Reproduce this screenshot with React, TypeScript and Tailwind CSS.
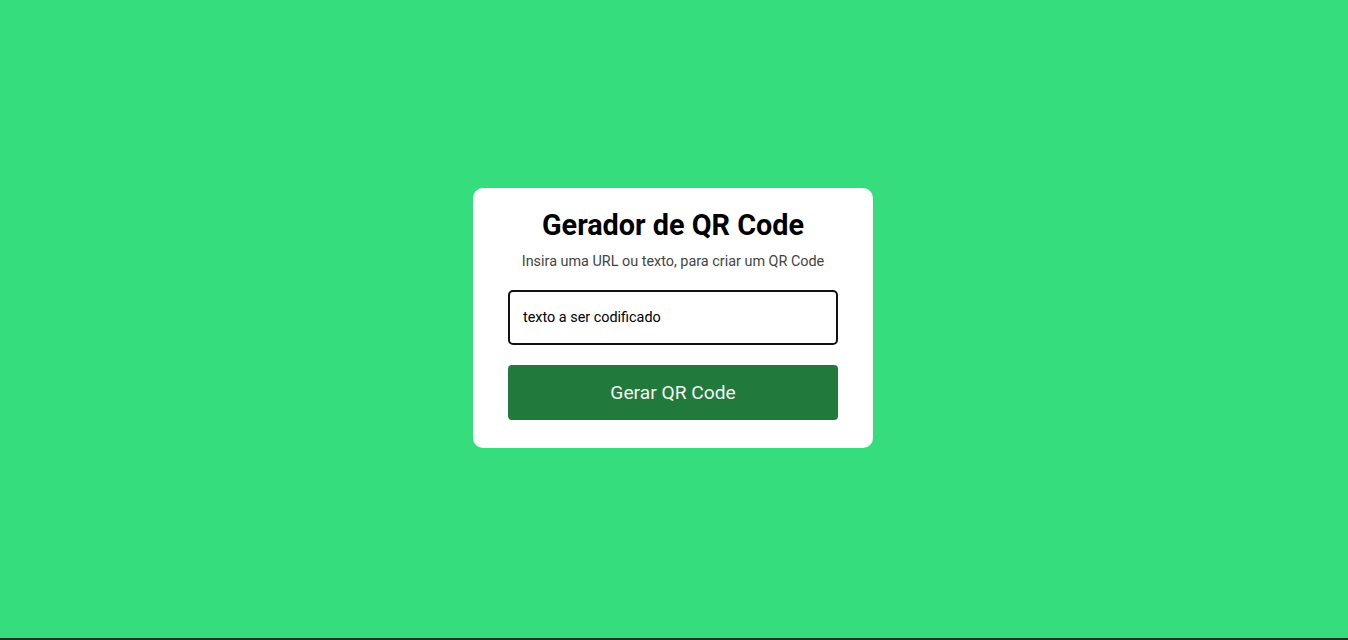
export default function App() {
  return (
    <div className="flex h-[640px] w-full flex-col" style={{ fontFamily: "Roboto, 'Liberation Sans', sans-serif" }}>
      <main className="flex flex-1 items-center justify-center bg-[#35dd7c] pb-[2px] pr-[2px]">
        <div className="flex w-[400px] flex-col items-center rounded-[10px] bg-white px-[35px] pb-[28px] pt-[21px]">
          <h1 className="text-[28.8px] font-bold leading-[33px] text-black">Gerador de QR Code</h1>
          <p className="mt-[10px] text-[14.4px] leading-5 text-[#444]">Insira uma URL ou texto, para criar um QR Code</p>
          <input
            type="text"
            defaultValue="texto a ser codificado"
            className="mt-[18px] h-[55px] w-full rounded-[5px] border-2 border-[#111] px-[13px] text-[14.4px] text-black outline-none"
          />
          <button className="mt-[20px] h-[55px] w-full rounded-[4px] bg-[#217a3c] pt-[2px] text-[19.2px] text-[#f5f5f5]">
            Gerar QR Code
          </button>
        </div>
      </main>
      <div className="h-[2px] bg-[#2b2b2b]"></div>
    </div>
  );
}
